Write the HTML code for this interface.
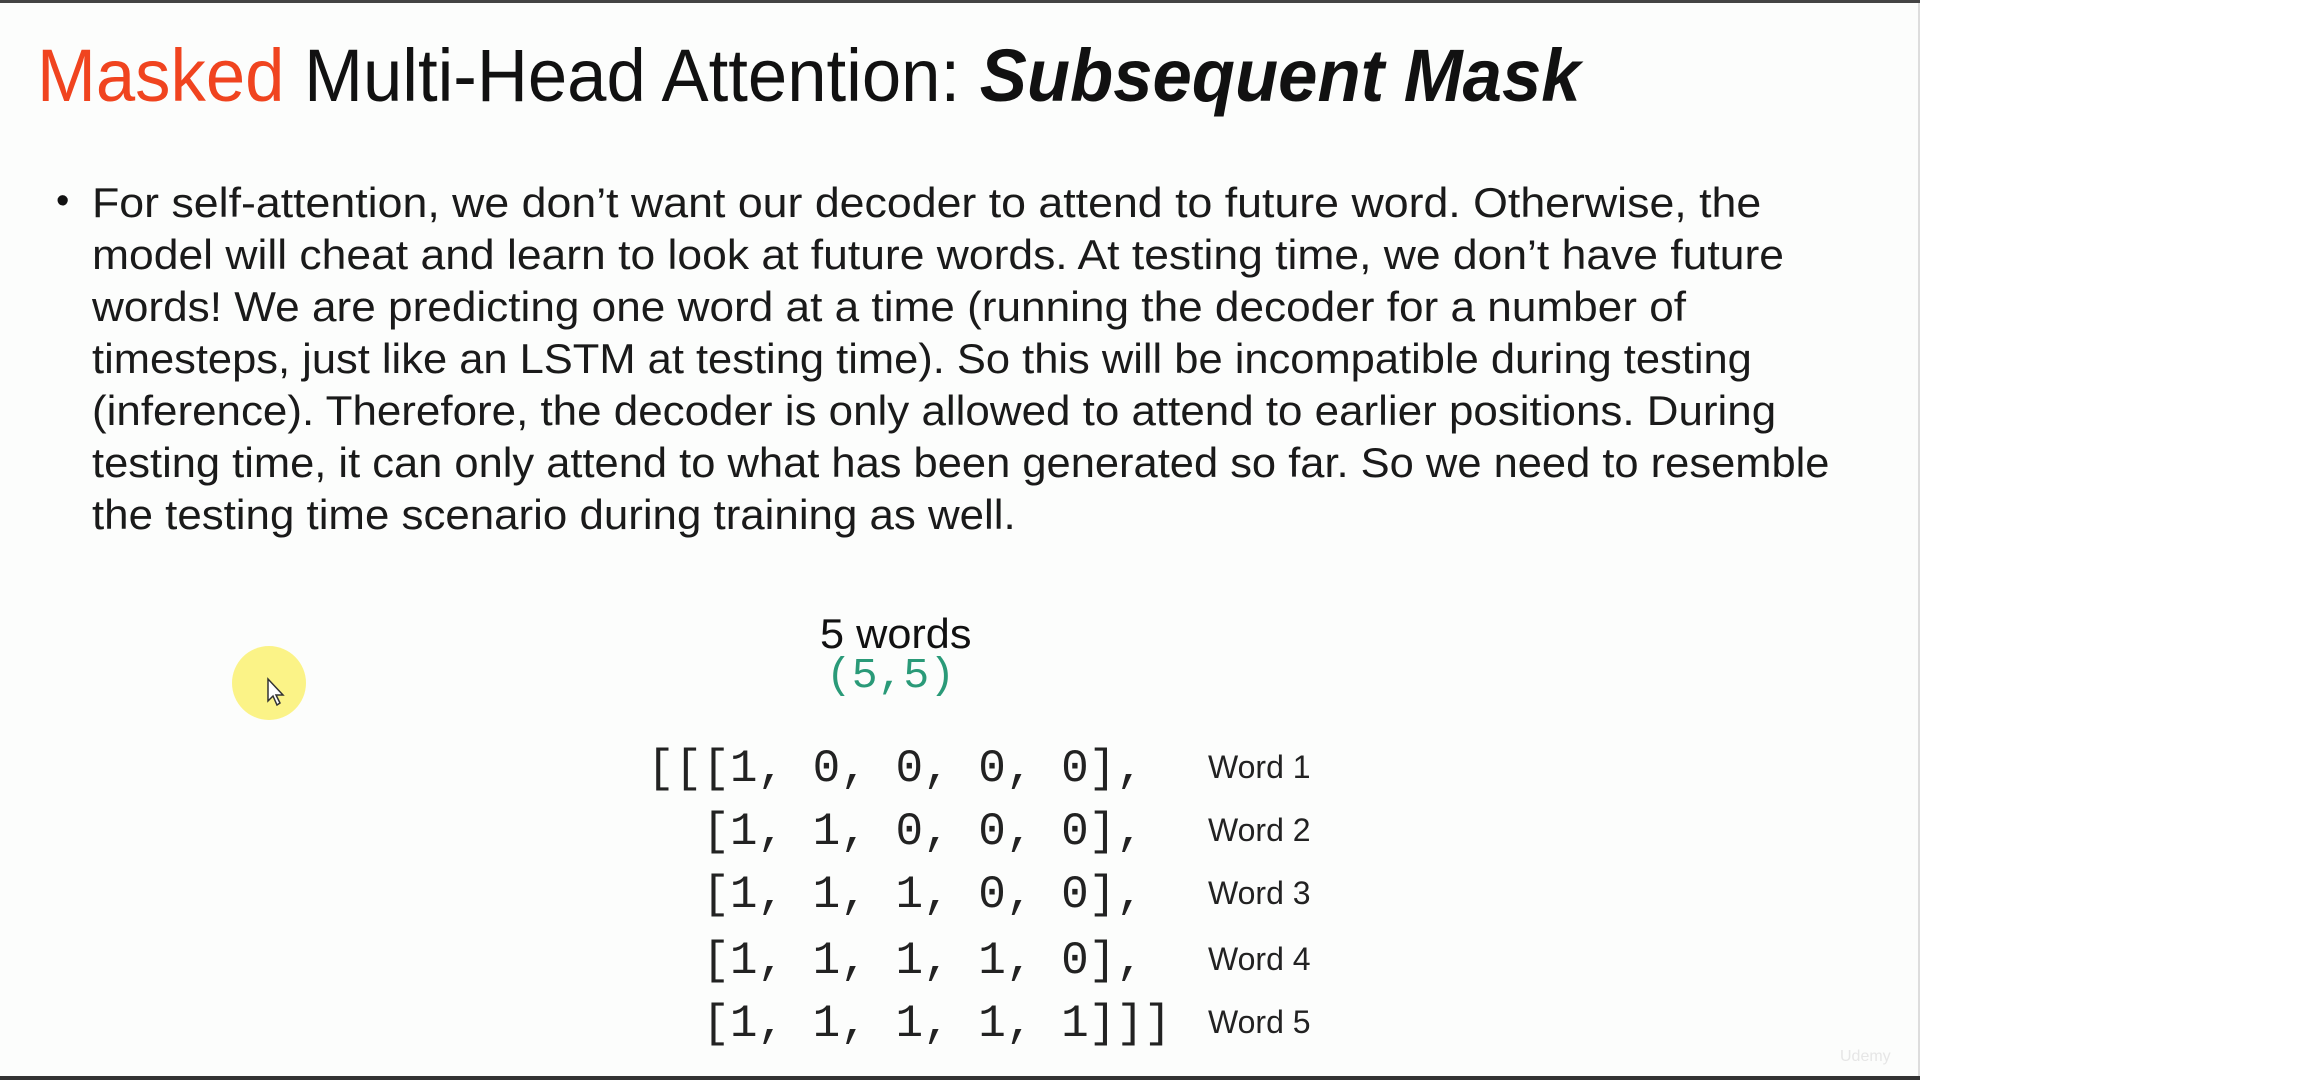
<!DOCTYPE html>
<html><head><meta charset="utf-8"><style>
html,body{margin:0;padding:0;width:2304px;height:1080px;overflow:hidden;background:#fff;}
.slide{position:absolute;left:0;top:0;width:1918px;height:1080px;background:#fcfdfc;border-right:2px solid #ddd;}
.topbar{position:absolute;left:0;top:0;width:1920px;height:3px;background:#444;}
.botbar{position:absolute;left:0;top:1076px;width:1920px;height:4px;background:#333;}
.t{position:absolute;white-space:nowrap;font-family:"Liberation Sans",sans-serif;color:#111;transform-origin:0 0;}
.title{left:37px;top:39px;font-size:74px;line-height:74px;transform:scaleX(0.955);}
.body{font-size:42px;line-height:42px;left:92px;color:#1a1a1a;}
.m{position:absolute;white-space:pre;font-family:"Liberation Mono",monospace;font-size:46px;line-height:46px;color:#222;}
.w{position:absolute;font-family:"Liberation Sans",sans-serif;font-size:32px;line-height:32px;color:#222;left:1208px;transform-origin:0 0;}
</style></head><body>
<div class="slide"></div>
<div class="topbar"></div>
<div class="botbar"></div>
<div class="t title"><span style="color:#f0441f">Masked</span> Multi-Head Attention: <i><b style="font-weight:600">Subsequent Mask</b></i></div>
<div class="t" style="left:56px;top:182px;font-size:38px;line-height:38px">•</div>
<div class="t body" style="top:182px;transform:scaleX(1.064)">For self-attention, we don’t want our decoder to attend to future word. Otherwise, the</div>
<div class="t body" style="top:234px;transform:scaleX(1.058)">model will cheat and learn to look at future words. At testing time, we don’t have future</div>
<div class="t body" style="top:286px;transform:scaleX(1.051)">words! We are predicting one word at a time (running the decoder for a number of</div>
<div class="t body" style="top:338px;transform:scaleX(1.035)">timesteps, just like an LSTM at testing time). So this will be incompatible during testing</div>
<div class="t body" style="top:390px;transform:scaleX(1.046)">(inference). Therefore, the decoder is only allowed to attend to earlier positions. During</div>
<div class="t body" style="top:442px;transform:scaleX(1.035)">testing time, it can only attend to what has been generated so far. So we need to resemble</div>
<div class="t body" style="top:494px;transform:scaleX(1.044)">the testing time scenario during training as well.</div>
<div class="t" style="left:820px;top:613px;font-size:42px;line-height:42px;transform:scaleX(1.03)">5 words</div>
<div class="m" style="left:826px;top:654px;font-size:43px;line-height:43px;color:#2a9a78">(5,5)</div>
<div style="position:absolute;left:232px;top:646px;width:74px;height:74px;border-radius:50%;background:#fbf27a;opacity:.9"></div>
<svg style="position:absolute;left:266px;top:677px" width="20" height="30" viewBox="0 0 20 30"><path d="M2 2 L2 24 L7 19 L11 28 L14 26 L10 18 L17 18 Z" fill="#fff" stroke="#333" stroke-width="1.5"/></svg>
<div class="m" style="left:647px;top:746px">[[[1, 0, 0, 0, 0],</div>
<div class="m" style="left:647px;top:809px">  [1, 1, 0, 0, 0],</div>
<div class="m" style="left:647px;top:872px">  [1, 1, 1, 0, 0],</div>
<div class="m" style="left:647px;top:938px">  [1, 1, 1, 1, 0],</div>
<div class="m" style="left:647px;top:1001px">  [1, 1, 1, 1, 1]]]</div>
<div class="w" style="top:751px">Word 1</div>
<div class="w" style="top:814px">Word 2</div>
<div class="w" style="top:877px">Word 3</div>
<div class="w" style="top:943px">Word 4</div>
<div class="w" style="top:1006px">Word 5</div>
<div class="t" style="left:1840px;top:1048px;font-size:16px;color:#e6e6e6">Udemy</div>
</body></html>
